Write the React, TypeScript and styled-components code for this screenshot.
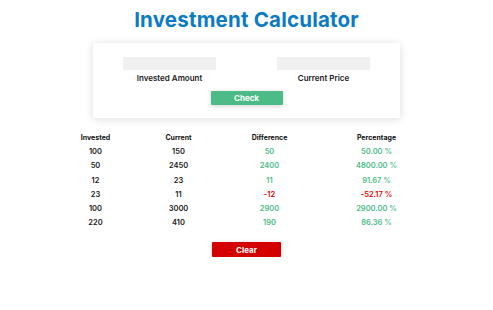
import React from "react";
import styled, { createGlobalStyle } from "styled-components";

const Global = createGlobalStyle`
  html, body { margin: 0; padding: 0; background: #ffffff; }
  body { font-family: "Inter", "Open Sans", sans-serif; color: #111; }
`;

const Page = styled.div`
  display: flex;
  flex-direction: column;
  align-items: center;
  width: 493px;
`;

const Title = styled.h1`
  margin: 6px 0 0 0;
  font-size: 20.5px;
  line-height: 28px;
  font-weight: 700;
  color: #0b7bc3;
  letter-spacing: 0.2px;
`;

const Card = styled.div`
  margin-top: 9px;
  width: 307px;
  height: 75px;
  box-sizing: border-box;
  background: #fff;
  box-shadow: 0 1px 8px rgba(0, 0, 0, 0.14);
  display: flex;
  flex-direction: column;
  align-items: center;
  padding-top: 14px;
`;

const Fields = styled.div`
  display: flex;
  gap: 61px;
`;

const Field = styled.div`
  display: flex;
  flex-direction: column;
  align-items: center;
  gap: 2px;
`;

const Input = styled.div`
  width: 93px;
  height: 13px;
  background: #f0f0f0;
`;

const Label = styled.div`
  font-size: 8px;
  line-height: 12px;
  font-weight: 600;
  color: #1a1a1a;
`;

const Button = styled.button<{ $bg: string }>`
  border: none;
  background: ${(p) => p.$bg};
  color: #fff;
  font-family: inherit;
  font-size: 8px;
  font-weight: 700;
  height: 14px;
  padding: 0;
  border-radius: 1px;
  box-shadow: 0 1px 5px rgba(0, 0, 0, 0.18);
  cursor: pointer;
`;

const CheckBtn = styled(Button)`
  width: 72px;
  margin-top: 7px;
`;

const ClearBtn = styled(Button)`
  width: 69px;
  height: 15px;
  margin-top: 12px;
`;

const Table = styled.div`
  margin-top: 12px;
  display: grid;
  grid-template-columns: 78px 88px 94px 120px;
  grid-template-rows: 14.6px;
  grid-auto-rows: 14.25px;
  align-items: center;
  justify-items: center;
`;

const Head = styled.div`
  font-size: 7px;
  font-weight: 700;
  color: #111;
`;

const Cell = styled.div<{ $tone?: "pos" | "neg" }>`
  font-size: 7.5px;
  font-weight: 600;
  color: ${(p) => (p.$tone === "pos" ? "#4cbb87" : p.$tone === "neg" ? "#e00000" : "#1a1a1a")};
`;

const rows = [
  [100, 150],
  [50, 2450],
  [12, 23],
  [23, 11],
  [100, 3000],
  [220, 410],
];

export default function App() {
  return (
    <Page>
      <Global />
      <Title>Investment Calculator</Title>
      <Card>
        <Fields>
          <Field>
            <Input />
            <Label>Invested Amount</Label>
          </Field>
          <Field>
            <Input />
            <Label>Current Price</Label>
          </Field>
        </Fields>
        <CheckBtn $bg="#4cbb87">Check</CheckBtn>
      </Card>
      <Table>
        <Head>Invested</Head>
        <Head>Current</Head>
        <Head>Difference</Head>
        <Head>Percentage</Head>
        {rows.map(([a, b], i) => {
          const d = b - a;
          const pct = ((d / a) * 100).toFixed(2);
          const tone = d >= 0 ? "pos" : "neg";
          return (
            <React.Fragment key={i}>
              <Cell>{a}</Cell>
              <Cell>{b}</Cell>
              <Cell $tone={tone}>{d}</Cell>
              <Cell $tone={tone}>{pct} %</Cell>
            </React.Fragment>
          );
        })}
      </Table>
      <ClearBtn $bg="#d40000">Clear</ClearBtn>
    </Page>
  );
}
